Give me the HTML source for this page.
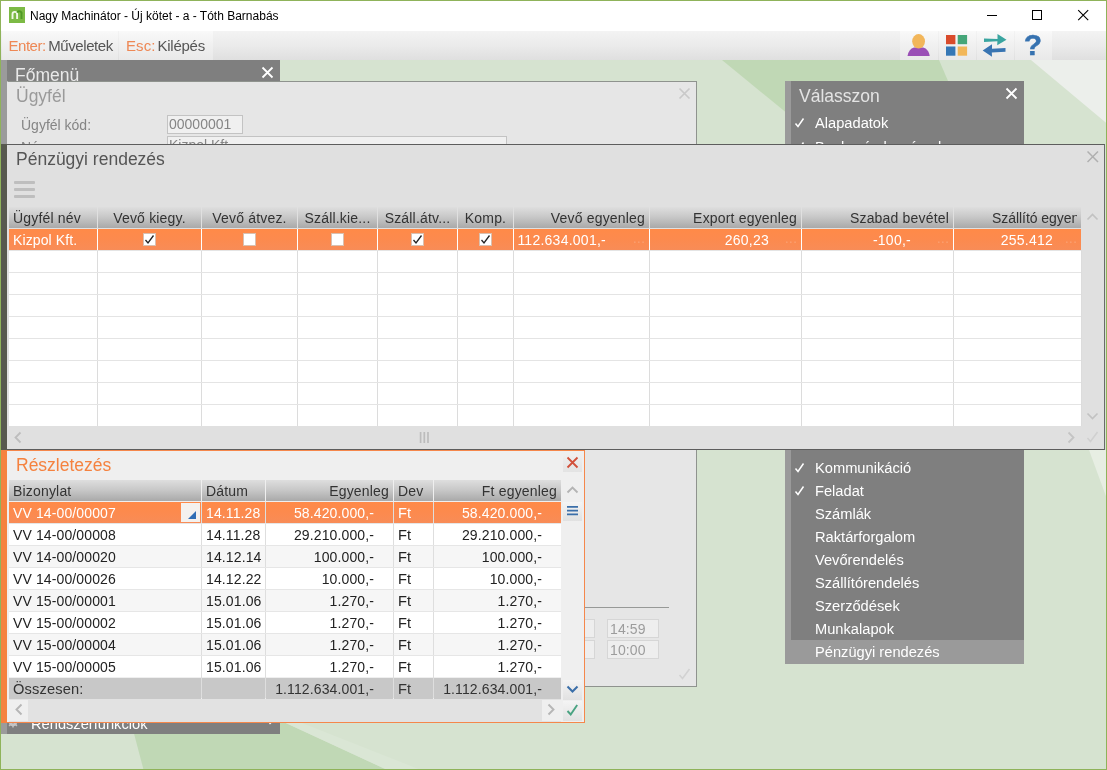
<!DOCTYPE html>
<html lang="hu"><head><meta charset="utf-8"><title>Nagy Machinátor</title>
<style>
*{box-sizing:border-box;margin:0;padding:0}
html,body{width:1107px;height:770px;overflow:hidden;background:#fff}
body{font-family:"Liberation Sans",Arial,sans-serif;font-size:14px;color:#333;position:relative}
div,svg,span,b,i{position:absolute;white-space:nowrap;font-style:normal;font-weight:normal}
#win{will-change:transform;left:0;top:0;width:1107px;height:770px;border:1px solid #8fb35a;background:#fff;overflow:hidden}
#title{left:0;top:0;width:1105px;height:30px;background:#fff}
#title .t{left:29px;top:7px;font-size:12px;color:#000;line-height:16px;letter-spacing:0px}
#toolbar{left:0;top:30px;width:1105px;height:29px;background:linear-gradient(#f3f3f3,#ebebeb 50%,#dfdfdf)}
.tb{top:0;height:29px;background:linear-gradient(#f9f9f9,#f0f0f0 50%,#e9e9e9);font-size:15px;line-height:29px;color:#555}
.tb i{color:#ee8855}
#bg{left:0;top:59px;width:1105px;height:709px;background:#d6e3d0;overflow:hidden}
/* panels */
#fomenu{left:0px;top:59px;width:279px;height:674px;background:#7f7f7f}
#fomenu .strip{left:0;top:0;width:6px;height:100%;background:#9b9b9b}
#ugyfel{left:6px;top:80px;width:690px;height:606px;background:#e6e6e6;border:1px solid #8f938e;border-left-color:#e6e6e6}
#val{left:784px;top:80px;width:239px;height:583px;background:#7f7f7f;color:#fff;font-size:14.67px}
#val .strip{left:0;top:0;width:6px;height:100%;background:#9a9a9a}
#val .it{left:30px;height:23px;line-height:23px}
#penz{left:0px;top:143px;width:1104px;height:306px;background:#e0e0e0;border-top:1px solid #5d5d5d;border-right:1px solid #6a6a6a;border-bottom:1px solid #5d5d5d}
#penz .h{line-height:23px}
#resz .h{line-height:22px}
#penz .strip{left:0;top:-1px;width:6px;height:306px;background:#58594f}
.h{top:0;height:21px;line-height:21px;overflow:hidden;letter-spacing:.18px;background:linear-gradient(#dedede,#c9c9c9 45%,#a9a9a9);color:#333;font-size:14px}
.h.r{text-align:right;padding-right:4px}
.h.c{text-align:center}
.h.l{padding-left:4px}
#resz{left:0px;top:449px;width:584px;height:273px;background:#efefef;border-top:1px solid #f5874b;border-right:1px solid #f5874b;border-bottom:1px solid #f5874b}
#resz .strip{left:0;top:-1px;width:6px;height:273px;background:#f5823f}
</style></head><body>
<div id="win">
<div id="title">
<svg style="left:8px;top:6px" width="16" height="16" viewBox="0 0 16 16"><rect width="16" height="16" fill="#7cba45"/><path d="M3.5 12V7.2a2.3 2.3 0 0 1 4.600 0V12" fill="none" stroke="#f1f8e8" stroke-width="1.9"/><path d="M8.2 5.600a2.300 2.300 0 0 1 4.300 1.600V12" fill="none" stroke="#4f9a25" stroke-width="1.9"/></svg>
<div class="t">Nagy Machinátor - Új kötet - a - Tóth Barnabás</div>
<svg style="left:985px;top:8px" width="12" height="12"><path d="M1 6.500h10" stroke="#000" stroke-width="1"/></svg>
<svg style="left:1030px;top:8px" width="12" height="12"><rect x="1.5" y="1.5" width="9" height="9" fill="none" stroke="#000" stroke-width="1"/></svg>
<svg style="left:1076px;top:8px" width="13" height="13"><path d="M1.200 1.200l10 10M11.200 1.200l-10 10" stroke="#000" stroke-width="1.100"/></svg>
</div>
<div id="toolbar">
<div class="tb" style="left:1px;width:116px"><i style="left:6.5px;letter-spacing:-.48px">Enter:</i><span style="left:46.2px;letter-spacing:-.41px">Műveletek</span></div>
<div class="tb" style="left:118px;width:94px"><i style="left:7px;letter-spacing:.1px">Esc:</i><span style="left:38.5px;letter-spacing:-.26px">Kilépés</span></div>
<div class="tb" style="left:899px;width:38px"></div>
<div class="tb" style="left:938px;width:37px"></div>
<div class="tb" style="left:976px;width:37px"></div>
<div class="tb" style="left:1014px;width:37px"></div>
<svg style="left:905px;top:2px" width="26" height="26" viewBox="0 0 26 26"><path d="M1.500 23c.6-4.500 3-7.500 6.500-8.500h9.200c3.500 1 5.900 4 6.500 8.500z" fill="#9a4fb6"/><ellipse cx="12.600" cy="8.300" rx="6.400" ry="7.200" fill="#f2b65a"/></svg>
<svg style="left:945px;top:4px" width="22" height="22" viewBox="0 0 22 22"><rect x="0" y="0" width="9.400" height="9.200" fill="#d94b2b"/><rect x="11.700" y="0" width="9.400" height="9.200" fill="#45a679"/><rect x="0" y="11.500" width="9.400" height="9.200" fill="#3577b5"/><rect x="11.700" y="11.500" width="9.400" height="9.200" fill="#f2b759"/></svg>
<svg style="left:981px;top:2px" width="26" height="26" viewBox="0 0 26 26"><path d="M2 5.500l13.500.5V1l9 5.700-9.300 5.600.2-4-13.400.8z" fill="#3aa5a0"/><path d="M23.500 15l-13.500.8v-4.600l-9.300 6.200 9.300 6.400-.2-4.300 13.700-.8z" fill="#3874b2"/></svg>
<div style="left:1020px;top:0;width:24px;height:29px;line-height:27px;font-size:30px;font-weight:bold;color:#3672b0;text-align:center;-webkit-text-stroke:0.4px #3672b0">?</div>
</div>
<div id="bg">
<svg style="left:0;top:0" width="1105" height="709" viewBox="0 59 1105 709">
<polygon points="721,59 938,59 975,145 826,145" fill="#c0d8b5"/>
<polygon points="1030,59 1106,59 1106,122.700" fill="#ecefeb"/>
<polygon points="1088,449 1106,449 1106,498" fill="#e7eee3"/>
<polygon points="129.700,720 280.500,720 386.400,769 142.600,769" fill="#c0d8b5"/>
<polygon points="280.500,720 296,720 420,769 386.400,769" fill="#dae6d5"/>
</svg>
</div>
<div id="fomenu"><div class="strip"></div>
<div style="left:14px;top:4px;font-size:17.5px;color:#e9e9e9;line-height:22px">Főmenü</div>
<svg style="left:260px;top:6px" width="13" height="13"><path d="M1.500 1.500l10 10M11.500 1.500l-10 10" stroke="#fff" stroke-width="1.8"/></svg>
<div style="left:30px;top:653px;font-size:14.67px;color:#fff;line-height:22px">Rendszerfunkciók</div>
<svg style="left:6px;top:656px" width="12" height="12" viewBox="0 0 12 12"><circle cx="6" cy="6" r="3" fill="none" stroke="#c4c4c4" stroke-width="2.4"/><path d="M6 .5v11M.5 6h11M2.100 2.100l7.800 7.800M9.900 2.100L2.100 9.900" stroke="#c4c4c4" stroke-width="1.5"/><circle cx="6" cy="6" r="1.400" fill="#7f7f7f"/></svg>
<svg style="left:267px;top:655px" width="8" height="10"><path d="M1.500 1l4 4-4 4" stroke="#fff" stroke-width="1.4" fill="none"/></svg>
</div>
<div id="ugyfel">
<div style="left:8px;top:3px;font-size:17.5px;color:#9a9a9a;line-height:22px">Ügyfél</div>
<svg style="left:670px;top:5px" width="13" height="13"><path d="M1.500 1.500l10 10M11.500 1.500l-10 10" stroke="#c9c9c9" stroke-width="1.700"/></svg>
<div style="left:13px;top:33px;font-size:14px;color:#858585;line-height:20px">Ügyfél kód:</div>
<div style="left:159px;top:33px;width:76px;height:19px;border:1px solid #c3c3c3;background:#f0f0f0;font-size:14px;color:#858585;line-height:17px;padding-left:1px">00000001</div>
<div style="left:13px;top:55px;font-size:14px;color:#858585;line-height:20px">Név:</div>
<div style="left:159px;top:54px;width:340px;height:19px;border:1px solid #c3c3c3;background:#f0f0f0;font-size:14px;color:#858585;line-height:17px;padding-left:1px">Kizpol Kft.</div>
<div style="left:570px;top:525px;width:91px;height:1px;background:#979997"></div>
<div style="left:570px;top:537px;width:17px;height:19px;border:1px solid #d6d6d6;border-left:none;background:#eee"></div>
<div style="left:570px;top:558px;width:17px;height:19px;border:1px solid #d6d6d6;border-left:none;background:#eee"></div>
<div style="left:599px;top:537px;width:52px;height:19px;border:1px solid #d6d6d6;background:#eee;font-size:14px;color:#9c9c9c;line-height:18px;padding-left:2px;letter-spacing:.1px">14:59</div>
<div style="left:599px;top:558px;width:52px;height:19px;border:1px solid #d6d6d6;background:#eee;font-size:14px;color:#9c9c9c;line-height:18px;padding-left:2px;letter-spacing:.1px">10:00</div>
<svg style="left:670px;top:586px" width="13" height="12"><path d="M1.500 7l3 3.500L11.500 1" stroke="#d2d2d2" stroke-width="1.600" fill="none"/></svg>
</div>
<div id="val"><div class="strip"></div><div style="left:0;top:559px;width:239px;height:24px;background:#9a9a9a"></div><div style="left:14px;top:4px;font-size:17.5px;color:#e4e4e4;line-height:22px">Válasszon</div><svg style="left:220px;top:6px" width="13" height="13"><path d="M1.500 1.500l10 10M11.500 1.500l-10 10" stroke="#fff" stroke-width="1.8"/></svg><div class="it" style="top:31px">Alapadatok</div><svg style="left:9px;top:36px" width="12" height="12"><path d="M1.500 6.500l2.500 3L9.500 1.500" stroke="#fff" stroke-width="1.500" fill="none"/></svg><div class="it" style="top:55px">Bankszámlaszámok</div><svg style="left:9px;top:60px" width="12" height="12"><path d="M1.500 6.500l2.500 3L9.500 1.500" stroke="#fff" stroke-width="1.500" fill="none"/></svg><div class="it" style="top:376px">Kommunikáció</div><svg style="left:9px;top:381px" width="12" height="12"><path d="M1.500 6.500l2.500 3L9.500 1.500" stroke="#fff" stroke-width="1.500" fill="none"/></svg><div class="it" style="top:399px">Feladat</div><svg style="left:9px;top:404px" width="12" height="12"><path d="M1.500 6.500l2.500 3L9.500 1.500" stroke="#fff" stroke-width="1.500" fill="none"/></svg><div class="it" style="top:422px">Számlák</div><div class="it" style="top:445px">Raktárforgalom</div><div class="it" style="top:468px">Vevőrendelés</div><div class="it" style="top:491px">Szállítórendelés</div><div class="it" style="top:514px">Szerződések</div><div class="it" style="top:537px">Munkalapok</div><div class="it" style="top:560px">Pénzügyi rendezés</div></div>
<div id="penz"><div class="strip"></div><div style="left:15px;top:3px;font-size:17.5px;color:#555;line-height:22px">Pénzügyi rendezés</div><svg style="left:1086px;top:6px" width="13" height="13"><path d="M.5 .5l10.500 10.500M11 .5L.5 11" stroke="#b0b0b0" stroke-width="1.500"/></svg><div style="left:13px;top:36px;width:21px;height:3px;background:#bebebe;border-radius:1px"></div><div style="left:13px;top:43px;width:21px;height:3px;background:#bebebe;border-radius:1px"></div><div style="left:13px;top:50px;width:21px;height:3px;background:#bebebe;border-radius:1px"></div><div style="left:8px;top:84px;width:1072px;height:197px;background:#fff"></div><div class="h l" style="left:8px;top:62px;width:88px">Ügyfél név</div><div style="left:8px;top:84px;width:88px;height:21px;background:linear-gradient(#ff8a48,#fc8a4e 50%,#f88c57)"></div><div style="left:96px;top:105px;width:1px;height:176px;background:#dcdcdc"></div><div class="h c" style="left:97px;top:62px;width:103px">Vevő kiegy.</div><div style="left:97px;top:84px;width:103px;height:21px;background:linear-gradient(#ff8a48,#fc8a4e 50%,#f88c57)"></div><div style="left:200px;top:105px;width:1px;height:176px;background:#dcdcdc"></div><div class="h c" style="left:201px;top:62px;width:95px">Vevő átvez.</div><div style="left:201px;top:84px;width:95px;height:21px;background:linear-gradient(#ff8a48,#fc8a4e 50%,#f88c57)"></div><div style="left:296px;top:105px;width:1px;height:176px;background:#dcdcdc"></div><div class="h c" style="left:297px;top:62px;width:79px">Száll.kie...</div><div style="left:297px;top:84px;width:79px;height:21px;background:linear-gradient(#ff8a48,#fc8a4e 50%,#f88c57)"></div><div style="left:376px;top:105px;width:1px;height:176px;background:#dcdcdc"></div><div class="h c" style="left:377px;top:62px;width:79px">Száll.átv...</div><div style="left:377px;top:84px;width:79px;height:21px;background:linear-gradient(#ff8a48,#fc8a4e 50%,#f88c57)"></div><div style="left:456px;top:105px;width:1px;height:176px;background:#dcdcdc"></div><div class="h c" style="left:457px;top:62px;width:55px">Komp.</div><div style="left:457px;top:84px;width:55px;height:21px;background:linear-gradient(#ff8a48,#fc8a4e 50%,#f88c57)"></div><div style="left:512px;top:105px;width:1px;height:176px;background:#dcdcdc"></div><div class="h r" style="left:513px;top:62px;width:135px">Vevő egyenleg</div><div style="left:513px;top:84px;width:135px;height:21px;background:linear-gradient(#ff8a48,#fc8a4e 50%,#f88c57)"></div><div style="left:648px;top:105px;width:1px;height:176px;background:#dcdcdc"></div><div class="h r" style="left:649px;top:62px;width:151px">Export egyenleg</div><div style="left:649px;top:84px;width:151px;height:21px;background:linear-gradient(#ff8a48,#fc8a4e 50%,#f88c57)"></div><div style="left:800px;top:105px;width:1px;height:176px;background:#dcdcdc"></div><div class="h r" style="left:801px;top:62px;width:151px">Szabad bevétel</div><div style="left:801px;top:84px;width:151px;height:21px;background:linear-gradient(#ff8a48,#fc8a4e 50%,#f88c57)"></div><div style="left:952px;top:105px;width:1px;height:176px;background:#dcdcdc"></div><div class="h r" style="left:953px;top:62px;width:127px"><span style="left:38px;top:0;width:85px;overflow:hidden;height:21px;line-height:23px;text-align:left;letter-spacing:-.05px">Szállító egyenleg</span></div><div style="left:953px;top:84px;width:127px;height:21px;background:linear-gradient(#ff8a48,#fc8a4e 50%,#f88c57)"></div><div style="left:1080px;top:105px;width:1px;height:176px;background:#dcdcdc"></div><div style="left:8px;top:105px;width:1072px;height:1px;background:#e4e4e4"></div><div style="left:8px;top:127px;width:1072px;height:1px;background:#e4e4e4"></div><div style="left:8px;top:149px;width:1072px;height:1px;background:#e4e4e4"></div><div style="left:8px;top:171px;width:1072px;height:1px;background:#e4e4e4"></div><div style="left:8px;top:193px;width:1072px;height:1px;background:#e4e4e4"></div><div style="left:8px;top:215px;width:1072px;height:1px;background:#e4e4e4"></div><div style="left:8px;top:237px;width:1072px;height:1px;background:#e4e4e4"></div><div style="left:8px;top:259px;width:1072px;height:1px;background:#e4e4e4"></div><div style="left:12px;top:84px;color:#fff;line-height:23px;letter-spacing:.12px">Kizpol Kft.</div><div style="left:142px;top:88px;width:13px;height:13px;background:#fff;border:1px solid #d9c0b0"></div><svg style="left:142px;top:88px" width="13" height="13"><path d="M2.500 7l2.500 3L10.500 2.500" stroke="#222" stroke-width="1.3" fill="none"/></svg><div style="left:242px;top:88px;width:13px;height:13px;background:#fff;border:1px solid #d9c0b0"></div><div style="left:330px;top:88px;width:13px;height:13px;background:#fff;border:1px solid #d9c0b0"></div><div style="left:410px;top:88px;width:13px;height:13px;background:#fff;border:1px solid #d9c0b0"></div><svg style="left:410px;top:88px" width="13" height="13"><path d="M2.500 7l2.500 3L10.500 2.500" stroke="#222" stroke-width="1.3" fill="none"/></svg><div style="left:478px;top:88px;width:13px;height:13px;background:#fff;border:1px solid #d9c0b0"></div><svg style="left:478px;top:88px" width="13" height="13"><path d="M2.500 7l2.500 3L10.500 2.500" stroke="#222" stroke-width="1.3" fill="none"/></svg><div style="left:0;width:605px;text-align:right;top:84px;color:#fff;line-height:23px;letter-spacing:.25px">112.634.001,-</div><div style="left:632px;top:84px;color:rgba(255,255,255,.2);line-height:19px;font-size:13px;letter-spacing:0.5px">...</div><div style="left:0;width:768px;text-align:right;top:84px;color:#fff;line-height:23px;letter-spacing:.25px">260,23</div><div style="left:784px;top:84px;color:rgba(255,255,255,.2);line-height:19px;font-size:13px;letter-spacing:0.5px">...</div><div style="left:0;width:910px;text-align:right;top:84px;color:#fff;line-height:23px;letter-spacing:.25px">-100,-</div><div style="left:936px;top:84px;color:rgba(255,255,255,.2);line-height:19px;font-size:13px;letter-spacing:0.5px">...</div><div style="left:0;width:1052px;text-align:right;top:84px;color:#fff;line-height:23px;letter-spacing:.25px">255.412</div><div style="left:1064px;top:84px;color:rgba(255,255,255,.2);line-height:19px;font-size:13px;letter-spacing:0.5px">...</div><svg style="left:1085px;top:67px" width="13" height="9"><path d="M1.500 7.500l5-5 5 5" stroke="#c2c2c2" stroke-width="1.7" fill="none"/></svg><svg style="left:1085px;top:267px" width="13" height="9"><path d="M1.500 1.500l5 5 5-5" stroke="#c2c2c2" stroke-width="1.700" fill="none"/></svg><svg style="left:13px;top:286px" width="8" height="13"><path d="M6.500 1.500L1.500 6.500l5 5" stroke="#bdbdbd" stroke-width="1.800" fill="none"/></svg><svg style="left:1066px;top:286px" width="8" height="13"><path d="M1.500 1.500l5 5-5 5" stroke="#c4c4c4" stroke-width="1.800" fill="none"/></svg><svg style="left:418px;top:287px" width="12" height="11"><path d="M1.600 0v11M5.300 0v11M9 0v11" stroke="#bcbcbc" stroke-width="1.7"/></svg><svg style="left:1085px;top:286px" width="13" height="12"><path d="M1.500 7l3 3.500L11.500 1" stroke="#d0d0d0" stroke-width="1.6" fill="none"/></svg></div>
<div id="resz"><div class="strip"></div><div style="left:15px;top:3px;font-size:17.5px;color:#f5823f;line-height:22px">Részletezés</div><div style="left:562px;top:3px;width:19px;height:18px;background:linear-gradient(#efefef,#e3e3e3)"></div><svg style="left:565px;top:5px" width="13" height="13"><path d="M1.500 1.500l10 10M11.500 1.500l-10 10" stroke="#d2503a" stroke-width="1.800"/></svg><div style="left:8px;top:51px;width:552px;height:175px;background:#fff"></div><div class="h l" style="left:8px;top:29px;width:192px">Bizonylat</div><div class="h l" style="left:201px;top:29px;width:63px">Dátum</div><div class="h r" style="left:265px;top:29px;width:127px">Egyenleg</div><div class="h l" style="left:393px;top:29px;width:39px">Dev</div><div class="h r" style="left:433px;top:29px;width:127px">Ft egyenleg</div><div style="left:8px;top:51px;width:192px;height:21px;line-height:23px;background:linear-gradient(#ff8a48,#fc8a4e 50%,#f88c57);color:#fff;font-size:14px;letter-spacing:.12px;padding-left:4px;">VV 14-00/00007</div><div style="left:201px;top:51px;width:63px;height:21px;line-height:23px;background:linear-gradient(#ff8a48,#fc8a4e 50%,#f88c57);color:#fff;font-size:14px;letter-spacing:.12px;padding-left:4px;">14.11.28</div><div style="left:265px;top:51px;width:127px;height:21px;line-height:23px;background:linear-gradient(#ff8a48,#fc8a4e 50%,#f88c57);color:#fff;font-size:14px;letter-spacing:.12px;text-align:right;padding-right:19px">58.420.000,-</div><div style="left:393px;top:51px;width:39px;height:21px;line-height:23px;background:linear-gradient(#ff8a48,#fc8a4e 50%,#f88c57);color:#fff;font-size:14px;letter-spacing:.12px;padding-left:4px;font-size:14.67px;letter-spacing:.15px">Ft</div><div style="left:433px;top:51px;width:127px;height:21px;line-height:23px;background:linear-gradient(#ff8a48,#fc8a4e 50%,#f88c57);color:#fff;font-size:14px;letter-spacing:.12px;text-align:right;padding-right:19px">58.420.000,-</div><div style="left:8px;top:73px;width:192px;height:21px;line-height:23px;background:#fff;color:#222;font-size:14px;letter-spacing:.12px;padding-left:4px;">VV 14-00/00008</div><div style="left:201px;top:73px;width:63px;height:21px;line-height:23px;background:#fff;color:#222;font-size:14px;letter-spacing:.12px;padding-left:4px;">14.11.28</div><div style="left:265px;top:73px;width:127px;height:21px;line-height:23px;background:#fff;color:#222;font-size:14px;letter-spacing:.12px;text-align:right;padding-right:19px">29.210.000,-</div><div style="left:393px;top:73px;width:39px;height:21px;line-height:23px;background:#fff;color:#222;font-size:14px;letter-spacing:.12px;padding-left:4px;font-size:14.67px;letter-spacing:.15px">Ft</div><div style="left:433px;top:73px;width:127px;height:21px;line-height:23px;background:#fff;color:#222;font-size:14px;letter-spacing:.12px;text-align:right;padding-right:19px">29.210.000,-</div><div style="left:8px;top:95px;width:192px;height:21px;line-height:23px;background:#f6f6f6;color:#222;font-size:14px;letter-spacing:.12px;padding-left:4px;">VV 14-00/00020</div><div style="left:201px;top:95px;width:63px;height:21px;line-height:23px;background:#f6f6f6;color:#222;font-size:14px;letter-spacing:.12px;padding-left:4px;">14.12.14</div><div style="left:265px;top:95px;width:127px;height:21px;line-height:23px;background:#f6f6f6;color:#222;font-size:14px;letter-spacing:.12px;text-align:right;padding-right:19px">100.000,-</div><div style="left:393px;top:95px;width:39px;height:21px;line-height:23px;background:#f6f6f6;color:#222;font-size:14px;letter-spacing:.12px;padding-left:4px;font-size:14.67px;letter-spacing:.15px">Ft</div><div style="left:433px;top:95px;width:127px;height:21px;line-height:23px;background:#f6f6f6;color:#222;font-size:14px;letter-spacing:.12px;text-align:right;padding-right:19px">100.000,-</div><div style="left:8px;top:117px;width:192px;height:21px;line-height:23px;background:#fff;color:#222;font-size:14px;letter-spacing:.12px;padding-left:4px;">VV 14-00/00026</div><div style="left:201px;top:117px;width:63px;height:21px;line-height:23px;background:#fff;color:#222;font-size:14px;letter-spacing:.12px;padding-left:4px;">14.12.22</div><div style="left:265px;top:117px;width:127px;height:21px;line-height:23px;background:#fff;color:#222;font-size:14px;letter-spacing:.12px;text-align:right;padding-right:19px">10.000,-</div><div style="left:393px;top:117px;width:39px;height:21px;line-height:23px;background:#fff;color:#222;font-size:14px;letter-spacing:.12px;padding-left:4px;font-size:14.67px;letter-spacing:.15px">Ft</div><div style="left:433px;top:117px;width:127px;height:21px;line-height:23px;background:#fff;color:#222;font-size:14px;letter-spacing:.12px;text-align:right;padding-right:19px">10.000,-</div><div style="left:8px;top:139px;width:192px;height:21px;line-height:23px;background:#f6f6f6;color:#222;font-size:14px;letter-spacing:.12px;padding-left:4px;">VV 15-00/00001</div><div style="left:201px;top:139px;width:63px;height:21px;line-height:23px;background:#f6f6f6;color:#222;font-size:14px;letter-spacing:.12px;padding-left:4px;">15.01.06</div><div style="left:265px;top:139px;width:127px;height:21px;line-height:23px;background:#f6f6f6;color:#222;font-size:14px;letter-spacing:.12px;text-align:right;padding-right:19px">1.270,-</div><div style="left:393px;top:139px;width:39px;height:21px;line-height:23px;background:#f6f6f6;color:#222;font-size:14px;letter-spacing:.12px;padding-left:4px;font-size:14.67px;letter-spacing:.15px">Ft</div><div style="left:433px;top:139px;width:127px;height:21px;line-height:23px;background:#f6f6f6;color:#222;font-size:14px;letter-spacing:.12px;text-align:right;padding-right:19px">1.270,-</div><div style="left:8px;top:161px;width:192px;height:21px;line-height:23px;background:#fff;color:#222;font-size:14px;letter-spacing:.12px;padding-left:4px;">VV 15-00/00002</div><div style="left:201px;top:161px;width:63px;height:21px;line-height:23px;background:#fff;color:#222;font-size:14px;letter-spacing:.12px;padding-left:4px;">15.01.06</div><div style="left:265px;top:161px;width:127px;height:21px;line-height:23px;background:#fff;color:#222;font-size:14px;letter-spacing:.12px;text-align:right;padding-right:19px">1.270,-</div><div style="left:393px;top:161px;width:39px;height:21px;line-height:23px;background:#fff;color:#222;font-size:14px;letter-spacing:.12px;padding-left:4px;font-size:14.67px;letter-spacing:.15px">Ft</div><div style="left:433px;top:161px;width:127px;height:21px;line-height:23px;background:#fff;color:#222;font-size:14px;letter-spacing:.12px;text-align:right;padding-right:19px">1.270,-</div><div style="left:8px;top:183px;width:192px;height:21px;line-height:23px;background:#f6f6f6;color:#222;font-size:14px;letter-spacing:.12px;padding-left:4px;">VV 15-00/00004</div><div style="left:201px;top:183px;width:63px;height:21px;line-height:23px;background:#f6f6f6;color:#222;font-size:14px;letter-spacing:.12px;padding-left:4px;">15.01.06</div><div style="left:265px;top:183px;width:127px;height:21px;line-height:23px;background:#f6f6f6;color:#222;font-size:14px;letter-spacing:.12px;text-align:right;padding-right:19px">1.270,-</div><div style="left:393px;top:183px;width:39px;height:21px;line-height:23px;background:#f6f6f6;color:#222;font-size:14px;letter-spacing:.12px;padding-left:4px;font-size:14.67px;letter-spacing:.15px">Ft</div><div style="left:433px;top:183px;width:127px;height:21px;line-height:23px;background:#f6f6f6;color:#222;font-size:14px;letter-spacing:.12px;text-align:right;padding-right:19px">1.270,-</div><div style="left:8px;top:205px;width:192px;height:21px;line-height:23px;background:#fff;color:#222;font-size:14px;letter-spacing:.12px;padding-left:4px;">VV 15-00/00005</div><div style="left:201px;top:205px;width:63px;height:21px;line-height:23px;background:#fff;color:#222;font-size:14px;letter-spacing:.12px;padding-left:4px;">15.01.06</div><div style="left:265px;top:205px;width:127px;height:21px;line-height:23px;background:#fff;color:#222;font-size:14px;letter-spacing:.12px;text-align:right;padding-right:19px">1.270,-</div><div style="left:393px;top:205px;width:39px;height:21px;line-height:23px;background:#fff;color:#222;font-size:14px;letter-spacing:.12px;padding-left:4px;font-size:14.67px;letter-spacing:.15px">Ft</div><div style="left:433px;top:205px;width:127px;height:21px;line-height:23px;background:#fff;color:#222;font-size:14px;letter-spacing:.12px;text-align:right;padding-right:19px">1.270,-</div><div style="left:8px;top:227px;width:192px;height:21px;line-height:23px;background:#c8c8c8;color:#333;font-size:14px;letter-spacing:.12px;padding-left:4px;font-size:14.67px;letter-spacing:.15px">Összesen:</div><div style="left:201px;top:227px;width:63px;height:21px;line-height:23px;background:#c8c8c8;color:#333;font-size:14px;letter-spacing:.12px;padding-left:4px;font-size:14.67px;letter-spacing:.15px"></div><div style="left:265px;top:227px;width:127px;height:21px;line-height:23px;background:#c8c8c8;color:#333;font-size:14px;letter-spacing:.12px;text-align:right;padding-right:19px">1.112.634.001,-</div><div style="left:393px;top:227px;width:39px;height:21px;line-height:23px;background:#c8c8c8;color:#333;font-size:14px;letter-spacing:.12px;padding-left:4px;font-size:14.67px;letter-spacing:.15px">Ft</div><div style="left:433px;top:227px;width:127px;height:21px;line-height:23px;background:#c8c8c8;color:#333;font-size:14px;letter-spacing:.12px;text-align:right;padding-right:19px">1.112.634.001,-</div><div style="left:200px;top:51px;width:1px;height:196px;background:#dedede"></div><div style="left:264px;top:51px;width:1px;height:196px;background:#dedede"></div><div style="left:392px;top:51px;width:1px;height:196px;background:#dedede"></div><div style="left:432px;top:51px;width:1px;height:196px;background:#dedede"></div><div style="left:8px;top:72px;width:552px;height:1px;background:#e6e6e6"></div><div style="left:8px;top:94px;width:552px;height:1px;background:#e6e6e6"></div><div style="left:8px;top:116px;width:552px;height:1px;background:#e6e6e6"></div><div style="left:8px;top:138px;width:552px;height:1px;background:#e6e6e6"></div><div style="left:8px;top:160px;width:552px;height:1px;background:#e6e6e6"></div><div style="left:8px;top:182px;width:552px;height:1px;background:#e6e6e6"></div><div style="left:8px;top:204px;width:552px;height:1px;background:#e6e6e6"></div><div style="left:180px;top:52px;width:19px;height:19px;background:#f4f1ee"></div><svg style="left:187px;top:60px" width="8" height="8"><path d="M8 0v8H0z" fill="#2f6db5"/></svg><svg style="left:565px;top:34px" width="13" height="9"><path d="M1.500 7.500l5-5 5 5" stroke="#b4b4b4" stroke-width="1.800" fill="none"/></svg><div style="left:562px;top:51px;width:19px;height:19px;background:linear-gradient(#f4f4f4,#e1e1e1)"></div><svg style="left:566px;top:55px" width="11" height="10"><path d="M0 .900h11M0 4.700h11M0 8.400h11" stroke="#3b6fa9" stroke-width="1.700"/></svg><div style="left:562px;top:229px;width:19px;height:20px;background:linear-gradient(#f4f4f4,#e1e1e1)"></div><svg style="left:565px;top:234px" width="13" height="9"><path d="M1.500 1.500l5 5 5-5" stroke="#3b6fa9" stroke-width="2" fill="none"/></svg><div style="left:562px;top:250px;width:19px;height:20px;background:linear-gradient(#f4f4f4,#e1e1e1)"></div><svg style="left:565px;top:253px" width="13" height="12"><path d="M1.500 7l3.200 3.500L11.200 1" stroke="#4aa382" stroke-width="1.900" fill="none"/></svg><div style="left:8px;top:248px;width:552px;height:23px;background:#e2e2e2"></div><div style="left:8px;top:249px;width:19px;height:21px;background:#efefef"></div><div style="left:541px;top:249px;width:19px;height:21px;background:#efefef"></div><svg style="left:14px;top:252px" width="8" height="13"><path d="M6.500 1.500L1.500 6.500l5 5" stroke="#b6b6b6" stroke-width="1.900" fill="none"/></svg><svg style="left:546px;top:252px" width="8" height="13"><path d="M1.500 1.500l5 5-5 5" stroke="#b6b6b6" stroke-width="1.900" fill="none"/></svg></div>
</div>
</body></html>
